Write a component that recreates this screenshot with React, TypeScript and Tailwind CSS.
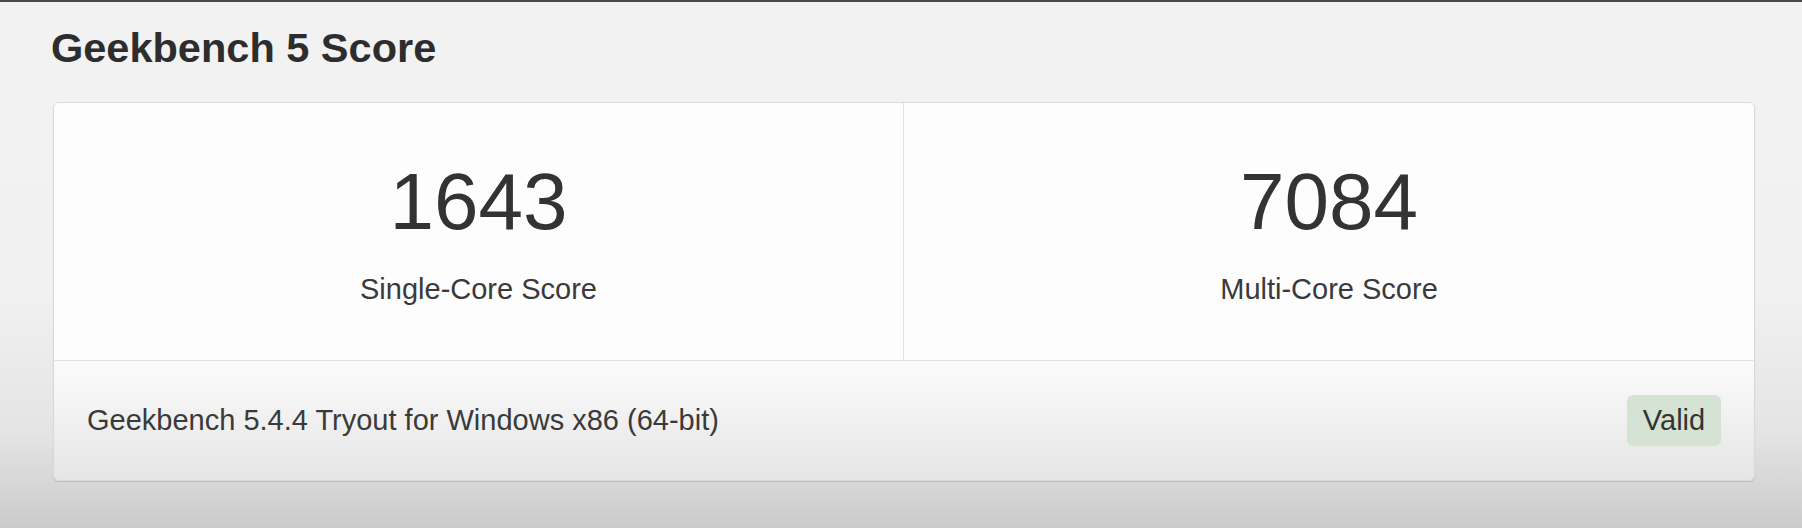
export default function App() {
  return (
    <div className="min-h-[528px] w-full bg-[linear-gradient(to_bottom,#f2f2f2_0%,#f1f1f1_55%,#e4e4e4_82%,#cbcbcb_100%)] font-['Liberation_Sans',Arial,sans-serif] text-[#333]">
      {/* top edge */}
      <div className="h-[2px] bg-[#4a4a4a]" />

      <div className="pl-[53px] pr-[47px]">
        {/* Title */}
        <h2 className="mt-[25px] -ml-[2px] text-[41.5px] font-bold leading-[42px] text-[#2d2d2d]">
          Geekbench 5 Score
        </h2>

        {/* Score card */}
        <div className="mt-[33px] overflow-hidden rounded-[6px] border border-[#d9d9d9] shadow-[0_1px_1px_rgba(0,0,0,0.12)]">
          <div className="grid grid-cols-2 border-b border-[#e2e2e2] bg-[#fdfdfd]">
            <div className="flex flex-col items-center border-r border-[#e2e2e2] pt-[59px] pb-[57px]">
              <div className="text-[80px] leading-none text-[#333]">1643</div>
              <div className="mt-[33px] text-[29px] leading-[28px] text-[#3a3a3a]">Single-Core Score</div>
            </div>
            <div className="flex flex-col items-center pt-[59px] pb-[57px]">
              <div className="text-[80px] leading-none text-[#333]">7084</div>
              <div className="mt-[33px] text-[29px] leading-[28px] text-[#3a3a3a]">Multi-Core Score</div>
            </div>
          </div>

          {/* Footer */}
          <div className="flex h-[119px] items-center justify-between bg-[linear-gradient(to_bottom,#fbfbfb,#e5e5e5)] px-[33px]">
            <span className="text-[29px] leading-none text-[#3a3a3a]">
              Geekbench 5.4.4 Tryout for Windows x86 (64-bit)
            </span>
            <span className="flex h-[51px] w-[94px] items-center justify-center rounded-[6px] bg-[#d4e3d3] text-[29px] leading-none text-[#333]">
              Valid
            </span>
          </div>
        </div>
      </div>
    </div>
  );
}
